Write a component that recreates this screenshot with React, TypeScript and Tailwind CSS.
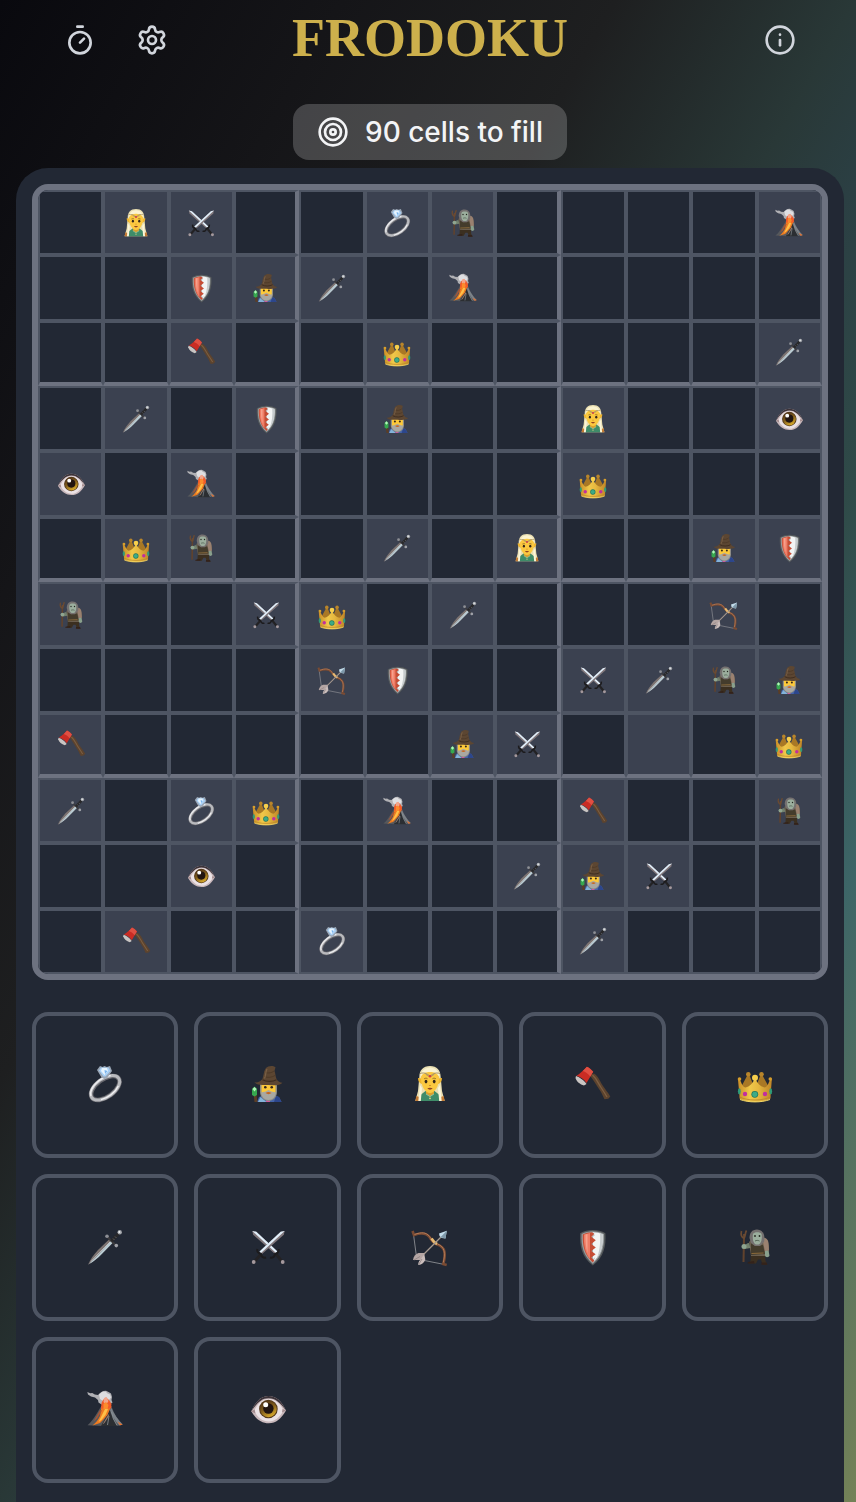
import type { ReactNode } from 'react';
import { Info, Settings, Target, Timer } from 'lucide-react';
import clsx from 'clsx';

type PieceName =
  | 'ring'
  | 'wizard'
  | 'elf'
  | 'axe'
  | 'crown'
  | 'dagger'
  | 'swords'
  | 'bow'
  | 'shield'
  | 'troll'
  | 'volcano'
  | 'eye';

// one letter per piece, "." is an empty cell and "*" is a highlighted empty cell
const LETTERS: Record<string, PieceName> = {
  r: 'ring',
  w: 'wizard',
  e: 'elf',
  a: 'axe',
  c: 'crown',
  d: 'dagger',
  s: 'swords',
  b: 'bow',
  h: 'shield',
  t: 'troll',
  v: 'volcano',
  y: 'eye',
};

const BOARD = [
  '.es..rt....v',
  '..hwd.v.....',
  '..a..c.....d',
  '.d.h.w..e..y',
  'y.v.....c...',
  '.ct..d.e..wh',
  't..sc.d...b.',
  '....bh..sdtw',
  'a.....ws.*.c',
  'd.rc.v..a..t',
  '..y....dws..',
  '.a..r...d...',
];

const PALETTE: PieceName[] = [
  'ring', 'wizard', 'elf', 'axe', 'crown',
  'dagger', 'swords', 'bow', 'shield', 'troll',
  'volcano', 'eye',
];

const DRAWINGS: Record<PieceName, ReactNode> = {
  ring: (
    <>
      <g transform="rotate(-36 18.3 22)" fill="none">
        <ellipse cx="18.3" cy="22" rx="16.4" ry="8.8" stroke="#66666c" strokeWidth="4.6" />
        <ellipse cx="18.3" cy="21.8" rx="16.6" ry="9.2" stroke="#b9babe" strokeWidth="3" />
        <path d="M2 20a16.6 9.2 0 0 1 28-5" stroke="#eeeef0" strokeWidth="1.5" />
        <path d="M8 29a16.6 9.2 0 0 0 22-1" stroke="#f1f1f3" strokeWidth="1.3" />
      </g>
      <path d="M10 4l3-4 2.6 1L17.5 0l2.4 1L23 0l2 5-4.5 6.500L17.500 13l-3-1.500z" fill="#9aa6b5" />
      <path d="M12 4.500L14 1.500h7.500l2 3.500-5 5.500h-2z" fill="#a8d0f6" />
      <path d="M15 2h5l1 3-3.500 4L14 5z" fill="#e8f5ff" />
      <path d="M17.500 4l3 1-2.500 3z" fill="#79b4ee" />
    </>
  ),
  wizard: (
    <>
      <path d="M7 36l2-5 5-2h9l6 2 2.500 5z" fill="#4564a8" />
      <path d="M8 36l2.500-5 6 5z" fill="#84b3d8" />
      <path d="M26 30l3 1 2.500 5H24z" fill="#2c468c" />
      <path d="M16.500 33h3l.5 3h-4z" fill="#d4599b" />
      <path d="M10 17h17v9c0 5-4 9-8.500 9S10 31 10 26z" fill="#8d8c86" />
      <path d="M11.500 17h14v8c0 4-3 6.500-7 6.500s-7-2.500-7-6.500z" fill="#fdc93a" />
      <path d="M11 26.500c3-.5 5-1 7.500-2.500 2.500 1.500 4.500 2 7.500 2.500-.5 4.500-3.500 7.500-7.500 7.500s-7-3-7.500-7.500z" fill="#a9a8a2" />
      <path d="M15.500 27c2-1.300 4-1.300 6 0-2 1.500-4 1.500-6 0z" fill="#c9661e" />
      <circle cx="15.300" cy="21.300" r="1.300" fill="#35271c" />
      <circle cx="21.700" cy="21.300" r="1.300" fill="#35271c" />
      <path d="M4.400 16.300c3 .6 6-.8 8-3.300C14 9 13.500 5 16 2c2-2.500 7-2.800 9.500-.8L24.500 5c1 2 .8 5 2 8 1.500 2.500 3.500 3.700 6 3.800-3 3-8 2.700-14 2.200-6-.4-10.500 1-14.100-2.700z" fill="#5c4632" />
      <path d="M15.500 6.500c3 1 6 .5 8.500-1.500M14 10.500c4 1.500 7.500 1 11-1" fill="none" stroke="#493624" strokeWidth=".8" />
      <path d="M17 3c-1.500 3-1 6-2.500 9.500" fill="none" stroke="#7a6046" strokeWidth="1.200" />
      <path d="M12.500 13.800c4 2.200 10 2.200 14 0" fill="none" stroke="#3d2c1e" strokeWidth="1.200" />
      <path d="M3.500 28h2.800l1.200 8H4.500z" fill="#5b3d25" />
      <path d="M4.500 20.500L7 23v6l-2.500 1.500L2 29v-6z" fill="#36a84f" />
      <path d="M4.500 21l2 2-2 2.500L2.500 23z" fill="#b3f4bb" />
    </>
  ),
  elf: (
    <>
      <path d="M18 0C11 0 7.500 4 7.300 11L6 25 3.300 35h29.400L30 25l-1.300-14C28.500 4 25 0 18 0z" fill="#eadfb2" />
      <path d="M6.500 35l2-6 5-4h9l5 4 2 6z" fill="#3f8c69" />
      <path d="M3.300 35l1-5 3 1v4zM32.700 35l-1-5-3 1v4z" fill="#c27a33" />
      <path d="M14 24h8v4l-4 3-4-3z" fill="#dba02e" />
      <path d="M10 12.500l-4-.5c0 3 1.500 5.500 4 6zM26 12.500l4-.5c0 3-1.500 5.500-4 6z" fill="#f0b52e" />
      <path d="M9 12c0-5 3-8.500 9-8.500s9 3.500 9 8.500c0 8-4 15-9 15S9 20 9 12z" fill="#fbc840" />
      <path d="M8.500 11c0-6 4.500-9.500 9.500-9.500s9.500 3.500 9.500 9.500C25 7 22 6 18 6s-7 1-9.500 5z" fill="#fbf3d0" />
      <path d="M8 7.500c5-1.500 7 .5 10 2.500 3-2 5-4 10-2.500M13 7c2 4 8 4 10 0" fill="none" stroke="#a99568" strokeWidth="1" />
      <circle cx="18" cy="10.200" r="1.300" fill="#cf3b49" />
      <path d="M12 13c1-1 2.500-1 3.500-.3M24 13c-1-1-2.500-1-3.500-.3" fill="none" stroke="#8f6a24" strokeWidth=".9" />
      <ellipse cx="14" cy="15.600" rx="1.400" ry="1.800" fill="#33261a" />
      <ellipse cx="22.200" cy="15.600" rx="1.400" ry="1.800" fill="#33261a" />
      <path d="M17 19.500h2" stroke="#d09429" strokeWidth="1" />
      <path d="M15.300 22.300c1.600-.8 3.800-.8 5.400 0-1.500 1.900-3.900 1.900-5.400 0z" fill="#8f4423" />
      <path d="M8 19L6.300 35h2.500l1.200-13zM28 19l1.700 16h-2.500L26 22z" fill="#fbf5d9" />
      <path d="M14 28l4 2.500 4-2.500" fill="none" stroke="#87c39f" strokeWidth="1" />
      <circle cx="18" cy="32.300" r=".9" fill="#e9d68b" />
    </>
  ),
  axe: (
    <>
      <path d="M15.500 9L20 7.500c5 3.500 6 8 9 12.500 2 3 5 6.500 7.300 10.500l-2 2.200-3.800.6c-1.500-3-3-7-5.500-10.300C22 18.500 20 14.500 15.500 9z" fill="#5c432e" />
      <path d="M18.500 9c4 3.500 5.500 8 8.500 12.500 2 3 4 6 6 9.500" fill="none" stroke="#7d5f42" strokeWidth="1.300" />
      <path d="M2 10c3 1 8 4 10.500 8L10 19.500C6 18.500 2.500 15.500 1.500 12z" fill="#c9c5c3" />
      <path d="M12.900.7c2 .8 4.500 2.800 6.300 5L12.500 17C10 13 6 10.800 2.300 9.800 5.500 8 10 4 12.900.7z" fill="#ca2c24" />
      <path d="M12.900.7c2 .8 4.500 2.800 6.300 5l-3 4.800C14 7.500 11.500 6 8.800 5z" fill="#e04f42" />
    </>
  ),
  crown: (
    <>
      <path d="M2 25L10.500 9h1.800L18 23l5.500-14h1.800L34 25z" fill="#a97825" />
      <path d="M1 14l1.800-1C4.500 18 6 21 8.500 21.500c4-1 7.500-4 9-9h1c1.500 5 5 8 9 9 2.500-.5 4-3.500 5.700-8.500l1.600 1-1.500 19c-8 4-22.500 4-30.500 0z" fill="url(#goldFill)" />
      <path d="M2.400 31c9 4 22.200 4 31.200 0" fill="none" stroke="#b8842a" strokeWidth=".8" />
      <path d="M3 33.500c8.500 3.200 21.500 3.200 30 0" fill="none" stroke="#f6d968" strokeWidth="1" />
      <circle cx="2.500" cy="13" r="1.800" fill="#d79e2c" />
      <circle cx="11.300" cy="8.200" r="2.300" fill="#b9852a" />
      <circle cx="18" cy="11.700" r="3" fill="#f7cf4c" />
      <circle cx="24.500" cy="8.200" r="2.300" fill="#b9852a" />
      <circle cx="33.300" cy="13" r="1.800" fill="#d79e2c" />
      <circle cx="17.800" cy="28.300" r="3.400" fill="#24795e" />
      <circle cx="17.800" cy="28.300" r="2.600" fill="#3dab86" />
      <circle cx="8" cy="28" r="2.200" fill="#c12f9f" />
      <circle cx="28" cy="28" r="2.200" fill="#c12f9f" />
      <ellipse cx="2.300" cy="25.300" rx="1.400" ry="3" fill="#2f9b78" />
      <ellipse cx="33.700" cy="25.300" rx="1.400" ry="3" fill="#2f9b78" />
    </>
  ),
  dagger: (
    <>
      <path d="M1 35.800C3 30.500 7 25.500 11 21L22 10.500l3.500 3.500L15 24.800C10.500 29.300 6 33 1 35.800z" fill="#7d7472" />
      <path d="M2 35C8 29.500 15 22 23.800 12.300l1.700 1.700L15 24.800C10.500 29.300 7 32.500 2 35z" fill="#b9ccd4" />
      <path d="M4 32.500C9 27 16 20 23 13" fill="none" stroke="#e3edf1" strokeWidth=".6" />
      <path d="M20.500 8l8 8" stroke="#3c3b3d" strokeWidth="1.800" />
      <path d="M24.500 12L31.500 4.800" stroke="#28282a" strokeWidth="3.200" />
      <path d="M26 9.500l1.500 1.500M28 7.500l1.500 1.500" stroke="#77777b" strokeWidth=".7" />
      <circle cx="32.700" cy="3.300" r="2.200" fill="#a3a6ab" />
      <circle cx="32.300" cy="2.900" r="1" fill="#eef1f4" />
      <circle cx="20" cy="7.300" r="1.800" fill="#8d8f95" />
      <circle cx="29.300" cy="16.600" r="1.800" fill="#a0a2a8" />
    </>
  ),
  swords: (
    <>
      <path d="M2.300 2l4 .8L27.500 22.500 25 25 3.200 5.700z" fill="#81777b" />
      <path d="M2.300 2l4 .8L27.500 22.500 26 24z" fill="#e1effa" />
      <path d="M25.500 24.500l6.500 8" stroke="#232224" strokeWidth="2.800" fill="none" />
      <path d="M20 28.500c2.500.7 4.500-.5 5-3.500 2.500-.5 4-2 3.700-5" stroke="#1c1b1d" strokeWidth="2" fill="none" />
      <path d="M34.700 2l-4 .8L9.500 22.500 12 25 33.800 5.700z" fill="#81777b" />
      <path d="M34.700 2l-4 .8L9.500 22.500 11 24z" fill="#e1effa" />
      <path d="M11 25l-6.500 7.500" stroke="#232224" strokeWidth="2.800" />
      <path d="M7.300 20c-.5 3 1.200 4.500 3.700 5 .5 3 2.500 4.200 5 3.500" stroke="#1c1b1d" strokeWidth="2" fill="none" />
      <circle cx="3.700" cy="33" r="1.900" fill="#a5999d" />
      <circle cx="32.700" cy="33" r="1.900" fill="#a5999d" />
    </>
  ),
  bow: (
    <>
      <path d="M1.300 4L4.800 30 33 35.600" fill="none" stroke="#8b8d92" strokeWidth=".9" />
      <path d="M.5 2l1.500 4c7-2.500 12-2.500 15.500 2 2.500 3.500 3.500 6 8 7.500 8 3 8.500 9 5.800 19.500l3.400 1" fill="none" stroke="#7a4b33" strokeWidth="2.600" />
      <path d="M2.500 5.500c7-2.500 11.500-2.500 15 2 2.500 3.500 4 5.800 8 7.500 7.500 3 8 9 5.800 18.500" fill="none" stroke="#b27a57" strokeWidth="1" />
      <path d="M19.500 9.500c1.500 2.500 2.500 4 5.500 5.500" stroke="#e8ba72" strokeWidth="2.600" fill="none" />
      <path d="M8 29L29.500 7.500" stroke="#a5988e" strokeWidth="1.300" />
      <path d="M27 4.500L34.800 1.800 33.500 9.500 29.800 9 27.500 7z" fill="#c3dcea" />
      <path d="M28.500 8.200L34.800 1.800 33.500 9.500z" fill="#7e98a9" />
      <path d="M1 31c.5-3.500 2.500-6.300 5.500-7h6l-1 4.500-3 2.500z" fill="#b5a6a4" />
      <path d="M6.300 36c-.3-2 .5-4 2.200-5.300L12.300 25l1 5.500C12.500 33.500 10 35.800 6.300 36z" fill="#cabdbb" />
      <path d="M2 31l6-3.500M7 35l3-5" stroke="#85797a" strokeWidth=".7" />
    </>
  ),
  shield: (
    <>
      <path d="M18.800.9c4.500 0 9 1 12.600 3.300.8 13-1.500 23.500-12.600 32.400C7.700 27.700 5.400 17.200 6.200 4.200 9.800 1.900 14.300.9 18.800.9z" fill="#54585a" />
      <path d="M18.800 2.200c4 0 8 .9 11.200 2.700.6 12-1.600 21.800-11.200 30C9.200 26.700 7 16.900 7.600 4.900 10.800 3.100 14.800 2.200 18.800 2.200z" fill="#969c9e" />
      <path d="M18.800 3.200c3.600 0 7 .7 10 2.200.4 11.500-1.800 20.500-10 28z" fill="#f2f4f4" />
      <path d="M26 4.200l2.800 1.200c.3 10-1 17.500-6 24C26 21 26.500 13 26 4.200z" fill="#c6cbcd" />
      <path d="M18.800 3.200l2 3-3.500 3v22l4-3-2.500 5.200-3.500-3V4z" fill="#b9bdbe" />
      <path d="M18 3.200C15 3.200 12 3.900 8.800 5.400c-.4 11.500 1.800 20.500 10 28l1.500-2-3-2.900 4.300-3.200-4.300-3.300 4.500-3.500-4.500-3.500 4.500-3.700-4.500-3.500 3-3z" fill="#c64d35" />
      <path d="M10 5.500l6-1.500v26C11 24 9.500 16 10 5.500z" fill="#ef7d66" />
      <path d="M11.500 5.500l2-.4v19C11.800 18 11.300 12 11.500 5.500z" fill="#f7a18c" />
    </>
  ),
  troll: (
    <>
      <path d="M6.500 33L7 9" stroke="#60422d" strokeWidth="2" />
      <path d="M4.500 2c-1 4 .5 6.500 2.500 7.500M9.500 1.500C8 4 8.500 7 7 9.500M7 5v4" fill="none" stroke="#6a4a32" strokeWidth="1.700" />
      <path d="M14 24h14l.5 8 2 3.500h-5l-1.500-5h-3l-2 4h-7l1.500-2.500z" fill="#3b2f20" />
      <path d="M11 33l6-1 .5 2.500h-7zM24.500 33.500h5l.8 2.200h-6z" fill="#33221a" />
      <path d="M12 13c3-4 12-6.500 17-3 3 3 3.500 8 2.500 13l-3 4H14z" fill="#6a5e4e" />
      <path d="M14 14l4 3 8-1 2 9-14 1z" fill="#443c2c" />
      <path d="M25 9c4-1 6.500 2 6.500 5.500l.5 7-4 1-1.500-7z" fill="#9a8170" />
      <path d="M12 14c-2 0-3.500 1.500-5 2.500l.5 3.500 6-1z" fill="#72806d" />
      <circle cx="7" cy="17.500" r="2.500" fill="#8fa590" />
      <path d="M28 22l3.500-.5 1 5c-.5 2-4 2.500-4.500 0z" fill="#89a08c" />
      <path d="M20 .5c-5 0-7.500 3.500-7.500 8.500l1.500 5 4 3h5l4-4c1.500-7-1-12.500-7-12.500z" fill="#757170" />
      <path d="M16 5c1-2.500 7.500-2.500 8.500 0 .8 4 0 9.500-3 10.500h-2.500C16 14.500 15.300 9 16 5z" fill="#9bae9d" />
      <circle cx="18" cy="7" r=".9" fill="#24281f" />
      <circle cx="22.500" cy="7" r=".9" fill="#24281f" />
      <path d="M18 12c1.500-.8 3-.8 4.500 0" stroke="#4c5c4d" strokeWidth=".9" fill="none" />
      <path d="M14.500 24.500l12-.5" stroke="#8b6a3b" strokeWidth="1.200" />
    </>
  ),
  volcano: (
    <>
      <path d="M.5 34.200C5 31 9 24 14 15.500h10.500C27 23 31 29 36 33.500l-5 1.200-15 .3z" fill="#56585c" />
      <path d="M24.500 17C27 23 31 29 35.500 33.500l-3 1C28 30 25 24 23 19z" fill="#7b8289" />
      <path d="M14 35l5-9 3.500-7 3 8 5 8z" fill="#2b2e32" />
      <path d="M24.500 21l2 7 3.500 6.500M22 25l-1.500 9" stroke="#8c949a" strokeWidth=".8" fill="none" />
      <path d="M14.500 15h10l-2 4-2 5-3.500 4-4 4-7.500 2.500c3.500-3 6-6 7.500-9.500z" fill="#ee7b20" />
      <path d="M18.500 17l2.500 1-2.500 6-4 5-3 2 3.500-7z" fill="#fec048" />
      <path d="M13 19l2 .5-5 8-3.500 3z" fill="#a85636" />
      <path d="M21.500 23l.5 2-4.500 7-2 1.500z" fill="#94796b" />
      <path d="M30.500 30.500l5 3.300-2.500.5z" fill="#ed6e25" />
      <path d="M.3 1l3 1.300 2-.3 2.500 1.500L11 4l2-2 3-2 3-.3L21.500 1l2.500 1.500L25 6l-.5 3 1 2.500-2 1.500-9 .5-3-2-.5-2.500L8 6.500l-4-1-3-2z" fill="#b0b0b4" />
      <path d="M12 3.500l3-2.500 3.500-.5 2 2 2.500 1 1 3-2 2.500-6 1-3-2z" fill="#dedee1" />
      <path d="M14.500 12l1.500-3 3-2.500 3 2.500 2.500 4-.5 4.500H14z" fill="#f15a29" />
      <path d="M17 7l2.500-1 2 4-2.500 4-2.500-3z" fill="#f2a58b" />
      <path d="M16.500 13l2.500-2 2.500 3-1 4h-4z" fill="#fb8c2c" />
    </>
  ),
  eye: (
    <>
      <path d="M1.200 20.300C6 10 11 4.900 18.500 4.900S31 9.500 36 19.500C31 28 26 32.200 18.800 32.200S6 28.500 1.200 20.300z" fill="#c9b8bb" />
      <path d="M4 20C8 12 12.500 8 18.500 8S30 12 33.500 19.500C29.500 26.500 25 30.500 18.700 30.500S8 26.500 4 20z" fill="#ebe2e5" />
      <path d="M1.200 20.300C6 10 11 4.900 18.500 4.900S31 9.500 36 19.500C30 11.500 25.500 7.200 18.500 7.200S7 12 1.200 20.300z" fill="#3b3238" />
      <path d="M1.200 20.300l3.500-1.800.8 4zM36 19.500l-3.500-1.500-.5 3.500z" fill="#a38b8d" />
      <circle cx="18.400" cy="18" r="9.300" fill="#54391a" />
      <circle cx="18.400" cy="18" r="8.300" fill="url(#irisFill)" />
      <circle cx="18.400" cy="17.500" r="5.200" fill="#211410" />
      <circle cx="15.700" cy="13.700" r="2.500" fill="#fff" />
    </>
  ),
};

const Piece = ({ name, className }: { name: PieceName; className: string }) => (
  <svg viewBox="0 0 36 36" className={clsx('overflow-visible', className)} aria-hidden="true">
    {DRAWINGS[name]}
  </svg>
);

const PieceGradients = () => (
  <svg className="absolute h-0 w-0" aria-hidden="true">
    <defs>
      <linearGradient id="goldFill" x1="0" x2="1" y1="0" y2="0">
        <stop offset="0" stopColor="#c98d26" />
        <stop offset="0.35" stopColor="#f0c84a" />
        <stop offset="0.6" stopColor="#e6b83f" />
        <stop offset="1" stopColor="#bf8527" />
      </linearGradient>
      <linearGradient id="irisFill" x1="0.2" x2="0.7" y1="0" y2="1">
        <stop offset="0" stopColor="#4a2e18" />
        <stop offset="0.5" stopColor="#84601c" />
        <stop offset="1" stopColor="#e0b12d" />
      </linearGradient>
    </defs>
  </svg>
);

const Header = () => (
  <header className="grid h-20 grid-cols-[1fr_auto_1fr] items-center pr-15 pl-16 text-gray-300">
    <div className="flex items-center gap-10">
      <button type="button" aria-label="Timer">
        <Timer className="h-8 w-8" />
      </button>
      <button type="button" aria-label="Settings">
        <Settings className="h-8 w-8" />
      </button>
    </div>
    <h1 className="pb-1 font-['Liberation_Serif',serif] text-[54px] leading-none font-bold text-[#cdb04c]">
      FRODOKU
    </h1>
    <div className="flex justify-end">
      <button type="button" aria-label="About">
        <Info className="h-8 w-8" />
      </button>
    </div>
  </header>
);

const Board = () => (
  <div className="grid aspect-square grid-cols-12 grid-rows-12 overflow-hidden rounded-2xl border-6 border-[#6d7280]">
    {BOARD.map((row, y) =>
      row.split('').map((letter, x) => (
        <button
          key={`${x}-${y}`}
          type="button"
          aria-label={`Row ${y + 1}, column ${x + 1}`}
          className={clsx(
            'flex min-h-0 min-w-0 items-center justify-center border-2 border-[#4e5563]',
            letter !== '.' && 'bg-[#3b4150]',
            (x === 3 || x === 7) && 'border-r-4 border-r-[#6d7280]',
            (y === 2 || y === 5 || y === 8) && 'border-b-4 border-b-[#6d7280]'
          )}
        >
          {LETTERS[letter] && <Piece name={LETTERS[letter]} className="h-7 w-7" />}
        </button>
      ))
    )}
  </div>
);

const Palette = () => (
  <div className="grid grid-cols-5 gap-4">
    {PALETTE.map((name) => (
      <button
        key={name}
        type="button"
        aria-label={name}
        className="flex aspect-square items-center justify-center rounded-2xl border-4 border-[#4e5563] pb-0.5"
      >
        <Piece name={name} className="h-9 w-9" />
      </button>
    ))}
  </div>
);

const App = () => {
  return (
    <div className="flex min-h-screen flex-col bg-[linear-gradient(to_bottom_right,#09090e,#151518_20%,#1e1f20_36%,#293837_50%,#2b3f43_56%,#2f4a48_66%,#3d6567_79%,#748257)] font-['Inter',sans-serif]">
      <PieceGradients />
      <Header />
      <div className="mt-6 mb-2 flex justify-center pr-3 pl-4">
        <div className="flex h-14 items-center gap-4 rounded-2xl bg-white/20 px-6 text-[28px] font-medium text-gray-100">
          <Target className="h-8 w-8" />
          <span>90 cells to fill</span>
        </div>
      </div>
      <main className="mr-3 ml-4 flex flex-1 flex-col gap-8 rounded-t-4xl bg-[#222834] p-4">
        <Board />
        <Palette />
      </main>
    </div>
  );
};

export default App;
